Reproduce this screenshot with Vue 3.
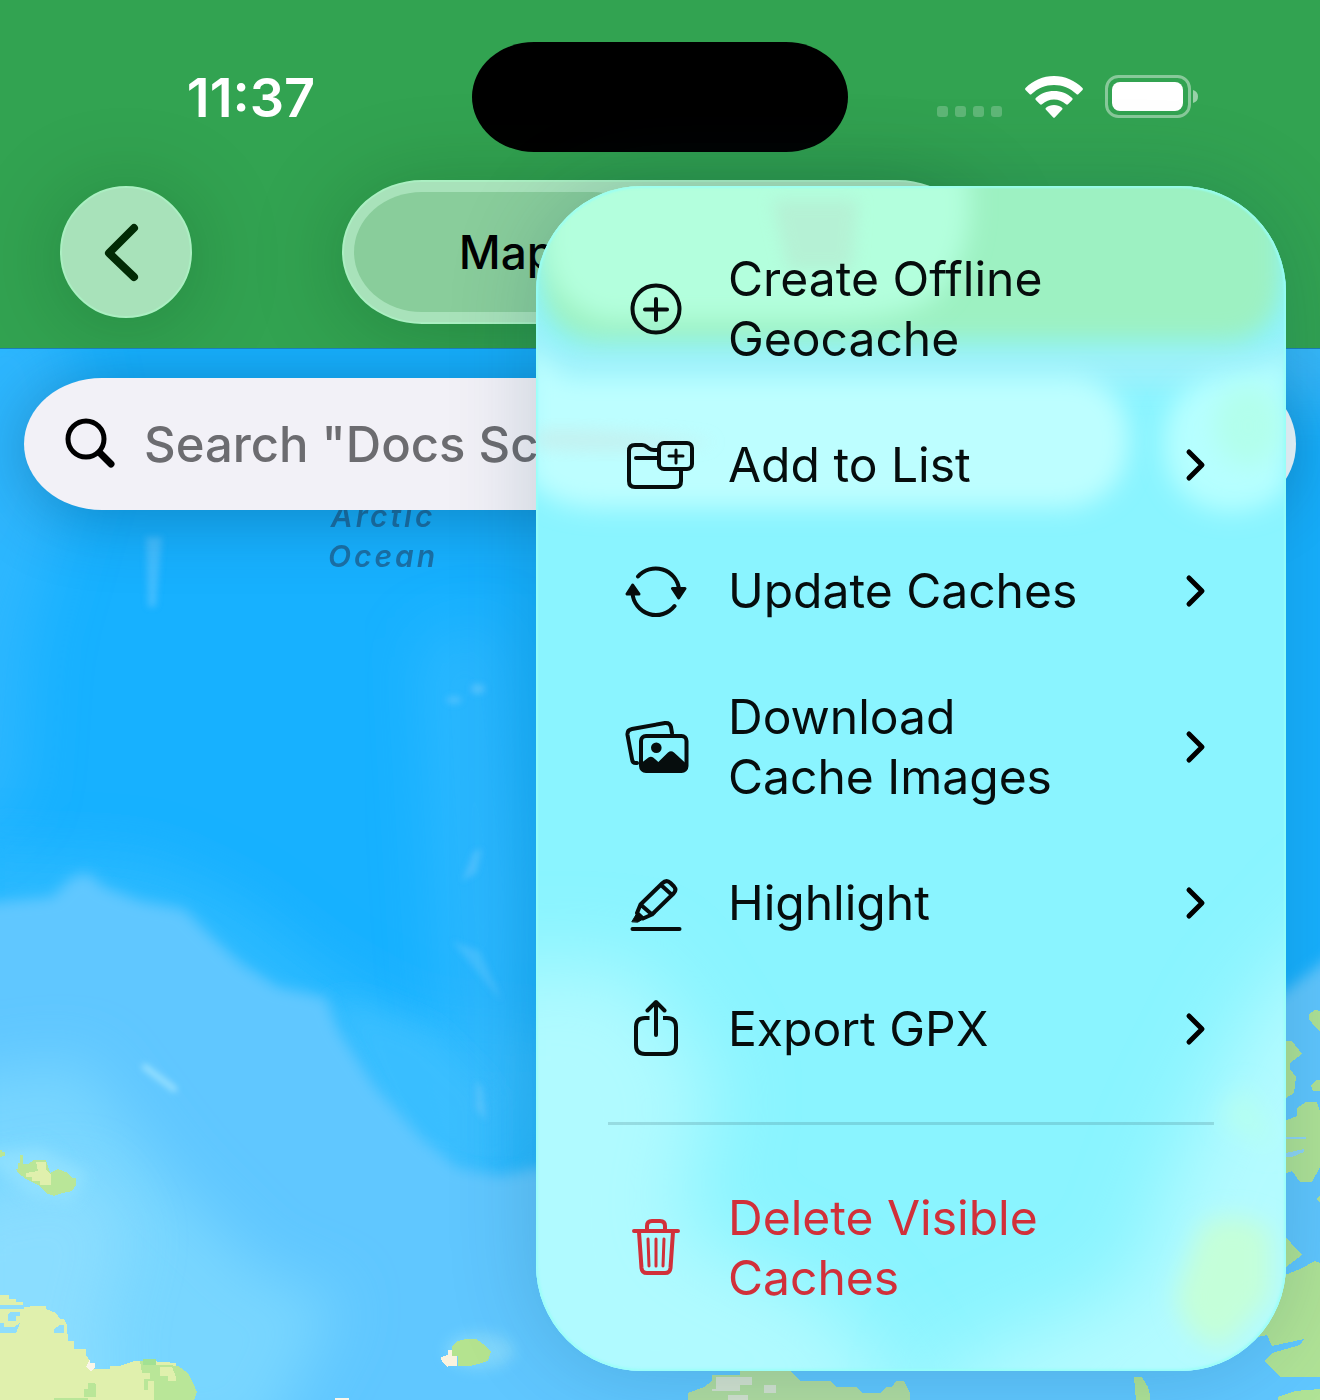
<script setup>
import { ref } from 'vue'

const query = ref('')

const actions = [
  { id: 'create', label: 'Create Offline Geocache', submenu: false },
  { id: 'list', label: 'Add to List', submenu: true },
  { id: 'update', label: 'Update Caches', submenu: true },
  { id: 'images', label: 'Download Cache Images', submenu: true },
  { id: 'highlight', label: 'Highlight', submenu: true },
  { id: 'export', label: 'Export GPX', submenu: true },
  { id: 'delete', label: 'Delete Visible Caches', submenu: false, danger: true }
]
</script>

<template>
  <div class="screen">
    <header class="header">
      <div class="status">
        <time class="clock">11:37</time>
        <div class="island"></div>
        <div class="indicators">
          <div class="signal"><i></i><i></i><i></i><i></i></div>
          <svg class="wifi" viewBox="0 0 58 42" width="58" height="42" aria-hidden="true">
            <path fill="#fff" d="M29 0C40 0 50 4.500 57.500 12Q58.300 13 57.500 14L53.500 18Q52.500 19 51.400 18C45 12 37.500 9 29 9S13 12 6.600 18Q5.500 19 4.500 18L.500 14Q-.300 13 .500 12C8 4.500 18 0 29 0Z" />
            <path fill="#fff" d="M29 15C36 15 42.500 17.600 47.200 22Q48.200 23 47.200 24L43 28.300Q42 29.200 41 28.300C37.500 25.200 33.500 23.500 29 23.500S20.500 25.200 17 28.300Q16 29.200 15 28.300L10.800 24Q9.800 23 10.800 22C15.500 17.600 22 15 29 15Z" />
            <path fill="#fff" d="M29 29C32 29 34.700 30 37 31.800Q38 32.800 37 33.800L30 41.200Q29 42.200 28 41.200L21 33.800Q20 32.800 21 31.800C23.300 30 26 29 29 29Z" />
          </svg>
          <svg class="battery" viewBox="0 0 94 44" width="94" height="44" aria-hidden="true">
            <rect x="1.500" y="1.500" width="83" height="40" rx="12" fill="none" stroke="#fff" stroke-opacity=".42" stroke-width="3" />
            <rect x="7" y="7" width="71" height="29" rx="8" fill="#fff" />
            <path d="M88 15Q93 16.500 93 21.500T88 28Z" fill="#fff" fill-opacity=".5" />
          </svg>
        </div>
      </div>

      <nav class="nav">
        <button class="back" type="button" aria-label="Back">
          <svg viewBox="0 0 132 132" width="132" height="132" aria-hidden="true">
            <path d="M74 42L49 67L74 91" fill="none" stroke="#022b05" stroke-width="8" stroke-linecap="round" stroke-linejoin="round" />
          </svg>
        </button>
        <div class="segments">
          <button class="segment" type="button">Map</button>
        </div>
      </nav>
    </header>

    <main class="map">
      <svg class="tiles" viewBox="0 348 1320 1052" preserveAspectRatio="xMinYMin slice" aria-hidden="true">
        <defs>
          <filter id="soft3" x="-50%" y="-50%" width="200%" height="200%"><feGaussianBlur stdDeviation="3" /></filter>
          <filter id="soft7" x="-50%" y="-50%" width="200%" height="200%"><feGaussianBlur stdDeviation="7" /></filter>
          <filter id="soft14" x="-50%" y="-50%" width="200%" height="200%"><feGaussianBlur stdDeviation="14" /></filter>
          <filter id="soft30" x="-50%" y="-50%" width="200%" height="200%"><feGaussianBlur stdDeviation="30" /></filter>
        </defs>
        <rect x="0" y="348" width="1320" height="1052" fill="#17b1ff" />
        <path d="M-60 300H60L90 430L30 640L20 800L-60 860Z" fill="#45bdff" opacity=".5" filter="url(#soft30)" />
        <path d="M-40 850L150 860L240 900L330 970L420 1020L560 1030V1200H-40Z" fill="#36beff" opacity=".7" filter="url(#soft30)" />
        <path d="M420 640L500 620L530 900L520 1140L470 1150L440 980Z" fill="#3fbfff" opacity=".5" filter="url(#soft30)" />
        <path d="M330 1000L370 1005L430 1030L490 1090L490 1180L400 1160Z" fill="#3cc0ff" opacity=".8" filter="url(#soft14)" />
        <path d="M-30 904L52 896L72 876L88 872L104 886L140 900L184 908L212 936L240 962L278 986L326 996L338 1028L374 1084L422 1138L458 1166L500 1174L560 1162L1000 1150L1220 1040L1350 940V1450H-30Z" fill="#60c7ff" filter="url(#soft7)" />
        <path d="M-60 1080L80 1060L170 1180L260 1270L340 1300L260 1450H-60Z" fill="#78d6ff" filter="url(#soft30)" />
        <path d="M-60 1200L90 1170L130 1230L100 1330L110 1420H-60Z" fill="#8fdfff" opacity=".8" filter="url(#soft30)" />
        <path d="M-20 1152L40 1146L88 1172L72 1202L30 1196Z" fill="#93e2ff" opacity=".8" filter="url(#soft7)" />
        <ellipse cx="480" cy="1350" rx="34" ry="18" fill="#85d9fb" opacity=".8" filter="url(#soft7)" />
        <path d="M145 1066L174 1088" stroke="#97e0ff" stroke-width="6" stroke-linecap="round" filter="url(#soft3)" />
        <g fill="#7fd0ff" filter="url(#soft3)">
          <path d="M146 536H162L156 606H148Z" opacity=".4" />
          <ellipse cx="478" cy="688" rx="7" ry="5" opacity=".5" />
          <ellipse cx="454" cy="699" rx="8" ry="4" opacity=".4" />
          <path d="M462 880L474 850L482 848L476 872Z" opacity=".4" />
          <path d="M452 940L480 950L502 1000L488 984Z" opacity=".3" />
          <path d="M476 1080L482 1086L486 1120L476 1108Z" opacity=".4" />
        </g>
        <path d="M1240 300H1380V400H1240Z" fill="#5cc0f5" opacity=".5" filter="url(#soft30)" />

        <g shape-rendering="crispEdges">
          <path fill="#b9e698" d="M0 1149H2V1151H5V1155H2V1156H0ZM16 1168H18V1162H20V1154H23V1163H28L34 1159H46L50 1172L58 1168L68 1172L72 1177H76V1184L72 1190L62 1192L54 1195L46 1192L38 1184L26 1178L18 1172Z" />
          <path fill="#e0f0ad" d="M36 1161H46V1168L51 1174V1184H40V1180H32V1176H26V1172L38 1170Z" />
          <path fill="#e0f0ad" d="M0 1294H9V1298H16V1301H23V1306H30V1305H46V1308L56 1312L60 1318H64L67 1324V1333H68V1340H74V1348L86 1348V1354L90 1360V1368H110V1365H120L134 1360H150L176 1362V1400H0Z" />
          <path fill="#8fddfb" d="M0 1304H24V1308H0ZM10 1311H20V1315H16V1320H8V1314ZM0 1322H4V1326H14L20 1322L16 1332H0ZM54 1328L60 1324H64V1332H54Z" />
          <path fill="#b9e698" d="M140 1360H152V1364H168L178 1365L188 1372L194 1384L197 1391L194 1400H154V1380H148V1389H144V1378H150V1372H142ZM88 1382H94L96 1384V1396H84V1388H88ZM54 1397H88V1400H54Z" />
          <path fill="#a2e193" d="M143 1358H156V1364H143Z" />
          <path fill="#e0f0ad" d="M160 1366H172L176 1376V1380H168V1375H160Z" />
          <path fill="#faf6e9" d="M90 1358V1362H95V1366L91 1370L86 1366ZM335 1397H349V1400H335Z" />
          <path fill="#b4e38f" d="M452 1345L458 1340L466 1338L476 1338L486 1345L491 1351L488 1360L478 1363L470 1365H458V1355H452Z" />
          <path fill="#faf3df" d="M441 1356L448 1354V1349H452V1355H457V1365H448V1367L442 1361Z" />
          <g fill="#b0e396">
            <path d="M1309 1013L1315 1009L1320 1010V1030L1315 1026L1309 1018Z" />
            <path d="M1280 1040H1292L1302 1053L1290 1062V1068L1296 1076L1294 1092L1286 1097H1280Z" />
            <path d="M1311 1085L1316 1079H1320V1090H1313Z" />
            <path d="M1280 1122L1297 1115V1107L1306 1101H1317L1320 1111V1166L1312 1181H1300L1292 1170L1280 1174Z" />
            <path d="M1316 1198L1320 1195V1202Z" />
            <path d="M1280 1230L1302 1254L1286 1266H1280Z" />
            <path d="M1280 1276L1300 1268L1315 1260L1320 1262V1376H1280L1265 1360L1272 1352L1300 1344L1304 1338L1272 1345L1267 1334L1240 1340V1310Z" />
            <path d="M1278 1396L1295 1390L1320 1388V1400H1278Z" />
            <path d="M1134 1376H1142L1148 1386L1150 1394V1400H1136Z" />
          </g>
          <path fill="#b0dca0" d="M688 1400V1392L704 1386L712 1380V1374H740V1370H790L800 1380H830L836 1386H856L862 1392H880L886 1386H892L896 1380H904L910 1392V1400Z" />
          <path fill="#d3e2cf" d="M712 1388H716V1376H752V1384H740V1390H712ZM764 1384H776V1392H764ZM728 1394H748V1400H728Z" />
          <path fill="#8fd6f5" d="M1286 1136H1306V1138H1286ZM1286 1152L1304 1148V1151L1292 1156H1286Z" />
        </g>
      </svg>

      <p class="sea">Arctic<br />Ocean</p>

      <div class="toolbar">
        <label class="search">
          <svg viewBox="0 0 56 56" width="56" height="56" aria-hidden="true">
            <circle cx="24" cy="23" r="18" fill="none" stroke="#000" stroke-width="5" />
            <path d="M38 37L49 48" stroke="#000" stroke-width="7" stroke-linecap="round" />
          </svg>
          <input v-model="query" type="text" placeholder="Search &quot;Docs Sc" />
        </label>
        <button class="round" type="button" aria-label="Options"></button>
      </div>
    </main>

    <div class="menu" role="menu">
      <svg class="glass" viewBox="0 0 750 1185" preserveAspectRatio="none" aria-hidden="true">
        <defs>
          <filter id="g8" x="-50%" y="-50%" width="200%" height="200%"><feGaussianBlur stdDeviation="8" /></filter>
          <filter id="g12" x="-50%" y="-50%" width="200%" height="200%"><feGaussianBlur stdDeviation="12" /></filter>
          <filter id="g40" x="-50%" y="-50%" width="200%" height="200%"><feGaussianBlur stdDeviation="40" /></filter>
        </defs>
        <rect width="750" height="1185" fill="#8af4ff" />
        <path d="M-80 780H100L180 900L140 1040L300 1120L400 1260H-80Z" fill="#b0faff" filter="url(#g40)" />
        <path d="M830 700L720 820L650 960L600 1100L400 1190V1260H830Z" fill="#b4fbff" filter="url(#g40)" />
        <path d="M-20 100L20 158H740L780 90V200H-20Z" fill="#9df1fb" filter="url(#g12)" />
        <path d="M4 -40H746V100Q740 154 690 156H60Q4 150 4 90Z" fill="#9df1c2" filter="url(#g12)" />
        <path d="M10 -20H430Q446 60 400 110Q370 132 300 134H70Q14 120 8 60Z" fill="#b3ffdd" filter="url(#g12)" />
        <path d="M236 14H322L316 84H252Z" fill="#b6ecd2" opacity=".7" filter="url(#g8)" />
        <path d="M-10 160L30 190H540Q592 200 592 256Q590 314 530 322H60Q10 320 -10 290Z" fill="#bdfeff" filter="url(#g12)" />
        <path d="M0 244Q60 240 180 256Q100 270 0 262Z" fill="#c6ecea" opacity=".7" filter="url(#g8)" />
        <path d="M752 170V300Q730 326 690 326Q630 318 628 258Q630 196 690 188Q730 186 752 170Z" fill="#b6ffff" filter="url(#g12)" />
        <ellipse cx="712" cy="240" rx="34" ry="40" fill="#b2ffec" filter="url(#g12)" />
        <path d="M708 900L730 936L738 964L684 934Z" fill="#b5fff0" filter="url(#g12)" />
        <path d="M665 1040Q700 1020 735 1045V1110L690 1160Q650 1160 640 1110Z" fill="#c4ffd9" filter="url(#g12)" />
      </svg>

      <div class="items">
        <template v-for="item in actions" :key="item.id">
          <hr v-if="item.danger" class="divider" />
          <button class="item" :class="{ danger: item.danger }" type="button" role="menuitem">
            <svg class="icon" viewBox="0 6 96 60" width="96" height="60" aria-hidden="true">
              <g v-if="item.id === 'create'">
                <circle cx="48" cy="36" r="23.500" />
                <path d="M48 26V47M37 36.500H59" />
              </g>
              <g v-else-if="item.id === 'list'">
                <rect x="51" y="14" width="33" height="26" rx="5" />
                <path d="M73 42V52Q73 58 67 58H27Q21 58 21 52V22Q21 16 27 16H34Q37 16 39 18L41 19.500Q43 21 46 21H50M28 29H50" />
                <path d="M68 21V34M61 27H75" stroke-width="3" />
              </g>
              <g v-else-if="item.id === 'update'">
                <path d="M30 21.500A23.500 23.500 0 0 1 71 34M66.500 51A23.500 23.500 0 0 1 24.500 38" />
                <path class="solid" d="M64.500 33.500H77L70.700 43ZM19 39H31L24.700 30Z" stroke-width="3" />
              </g>
              <g v-else-if="item.id === 'images'">
                <path d="M29 52Q24.500 52.500 24 48L19.500 24Q19 19 24 18L57 12Q62 11.500 63 16L64 22" />
                <rect x="33" y="25" width="45.500" height="35" rx="5" />
                <circle class="solid" cx="48.300" cy="36.800" r="5.300" stroke="none" />
                <path class="solid" stroke="none" d="M34 51.500L40.500 46.500Q43 44.800 45.500 46.800L50.300 51L60 41.500Q63 39 66 41.500L78 52.500V58Q78 61 75 61H37Q34 61 34 58Z" />
              </g>
              <g v-else-if="item.id === 'highlight'">
                <path d="M32.500 37.500L54 16.500Q58.500 12 62.500 16L66 19.500Q69 23 65.500 26.500L44 47.500L35 51.500L29 46ZM32.500 37.500L44 47.500M53 18L64 28" />
                <path d="M24.500 62H71.500" />
                <path class="solid" stroke-width="1" d="M24 54.500L29 46L35 52L30 55Z" />
              </g>
              <g v-else-if="item.id === 'export'">
                <path stroke-linecap="butt" d="M41.500 25H37Q28 25 28 34V52Q28 61 37 61H59Q68 61 68 52V34Q68 25 59 25H55" />
                <path d="M48 10V42M39.500 17.500L48 9L56.500 17.500" />
              </g>
              <g v-else>
                <path d="M26 19H70M39 18V14Q39 9 44 9H52Q57 9 57 14V18M31 20L33.500 56Q34 61 39 61H57Q62 61 62.500 56L65 20" />
                <path d="M40 27L41 54M48 27V54M56 27L55 54" stroke-width="3" />
              </g>
            </svg>
            <span class="label">{{ item.label }}</span>
            <svg v-if="item.submenu" class="chevron" viewBox="0 0 20 32" width="20" height="32" aria-hidden="true">
              <path d="M3 3L16 16L3 29" />
            </svg>
          </button>
        </template>
      </div>
    </div>
  </div>
</template>

<style>
body {
  margin: 0;
}
</style>

<style scoped>
.screen {
  position: relative;
  display: flex;
  flex-direction: column;
  min-height: 100vh;
  overflow: hidden;
  font-family: Inter, "Liberation Sans", sans-serif;
}

button {
  margin: 0;
  padding: 0;
  border: 0;
  background: none;
  color: inherit;
  font: inherit;
}

svg {
  display: block;
  flex: none;
}

.header {
  padding: 42px 0 24px;
  background: #32a351;
}

.status {
  display: grid;
  grid-template-columns: 1fr 376px 1fr;
  align-items: center;
  padding: 0 30px;
}

.clock {
  justify-self: center;
  padding-top: 2px;
  color: #fff;
  font-size: 54px;
  font-weight: 600;
  line-height: 60px;
}

.island {
  height: 110px;
  border-radius: 62px / 55px;
  background: #000;
}

.indicators {
  display: flex;
  align-items: center;
  justify-self: center;
  padding-right: 2px;
}

.signal {
  display: flex;
  align-self: flex-end;
  gap: 7px;
  margin-right: 23px;
  margin-bottom: 2px;
}

.signal i {
  width: 11px;
  height: 11px;
  border-radius: 3px;
  background: rgba(255, 255, 255, 0.22);
}

.wifi {
  margin-right: 22px;
}

.nav {
  display: grid;
  grid-template-columns: 1fr 636px 1fr;
  align-items: center;
  margin-top: 28px;
  padding: 0 60px;
}

.back,
.segments {
  box-sizing: border-box;
  border: 2px solid #abefc2;
  background: #a8e2ba;
  box-shadow: 0 8px 90px rgba(0, 50, 20, 0.26);
}

.back {
  display: flex;
  align-items: center;
  justify-content: center;
  width: 132px;
  height: 132px;
  border-radius: 50%;
}

.segments {
  display: grid;
  grid-template-columns: 1fr 1fr;
  height: 144px;
  padding: 10px;
  border-radius: 80px / 72px;
}

.segment {
  border-radius: 68px / 60px;
  background: #89cd9b;
  color: #000;
  font-size: 46px;
  font-weight: 500;
}

.map {
  position: relative;
  flex: 1;
  overflow: hidden;
  border-top: 1px solid #1a7fb8;
}

.tiles {
  position: absolute;
  inset: 0;
  width: 100%;
  height: 100%;
}

.sea {
  position: absolute;
  top: 147px;
  left: 328px;
  margin: 0;
  color: #1b70a6;
  font-size: 30px;
  font-style: italic;
  font-weight: 600;
  line-height: 40px;
  letter-spacing: 3px;
  text-align: center;
}

.toolbar {
  position: relative;
  display: flex;
  gap: 24px;
  padding: 29px 24px;
}

.search {
  box-sizing: border-box;
  display: flex;
  flex: 1;
  align-items: center;
  gap: 26px;
  height: 132px;
  padding: 0 38px;
  border-radius: 78px / 66px;
  background: #f2f1f7;
  box-shadow: 0 6px 70px rgba(0, 50, 80, 0.35);
}

.search input {
  flex: 1;
  min-width: 0;
  padding: 2px 0 0;
  border: 0;
  outline: 0;
  background: none;
  color: #000;
  font: 500 49px/60px Inter, "Liberation Sans", sans-serif;
}

.search input::placeholder {
  color: #6c6c70;
  opacity: 1;
}

.round {
  width: 132px;
  height: 132px;
  border-radius: 50%;
  background: #f0fbff;
  box-shadow: 0 6px 60px rgba(0, 50, 80, 0.25);
}

.menu {
  position: absolute;
  top: 186px;
  right: 34px;
  width: 750px;
  border-radius: 106px;
  overflow: hidden;
  background: #8af4ff;
  box-shadow: 0 0 90px rgba(0, 60, 90, 0.2);
}

.menu::after {
  content: "";
  position: absolute;
  inset: 0;
  border-radius: inherit;
  box-shadow: inset 0 0 2px 2px rgba(150, 255, 246, 0.8);
  pointer-events: none;
}

.glass {
  position: absolute;
  inset: 0;
  width: 100%;
  height: 100%;
}

.items {
  position: relative;
  padding: 30px 72px;
  color: #060d0d;
}

.item {
  display: flex;
  align-items: center;
  gap: 24px;
  width: 100%;
  padding: 33px 8px 33px 0;
  font-size: 48px;
  line-height: 60px;
  text-align: left;
}

.label {
  max-width: 364px;
}

.icon,
.chevron {
  overflow: visible;
  fill: none;
  stroke: currentColor;
  stroke-width: 4;
  stroke-linecap: round;
  stroke-linejoin: round;
}

.chevron {
  margin-left: auto;
  stroke: #000;
  stroke-width: 5;
}

.solid {
  fill: currentColor;
}

.divider {
  height: 3px;
  margin: 30px 0;
  border: 0;
  background: rgba(60, 110, 120, 0.22);
}

.danger {
  color: #d1303a;
}
</style>
